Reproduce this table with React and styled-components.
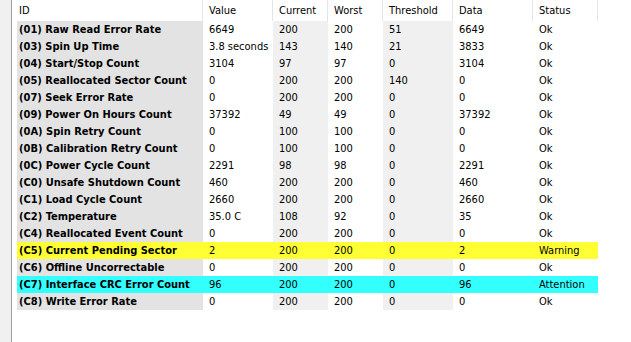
import styled, { createGlobalStyle } from "styled-components";

const GlobalStyle = createGlobalStyle`
    html, body {
        margin: 0;
        padding: 0;
        background: #ffffff;
    }
    body {
        font-family: "DejaVu Sans Condensed", "DejaVu Sans", sans-serif;
        font-stretch: condensed;
        font-size: 11px;
        color: #000000;
    }
`;

const Window = styled.div`
    display: flex;
    min-height: 100vh;
`;

const Gutter = styled.div`
    width: 11px;
    flex: none;
    background: #f0f0f0;
    border-right: 1px solid #a0a0a0;
`;

const ListView = styled.div`
    flex: 1;
    background: #ffffff;
`;

const Header = styled.div`
    display: grid;
    grid-template-columns: 191px 70px 55px 55px 70px 80px 65px;
    height: 21px;
`;

const HeaderCell = styled.div`
    border-right: 1px solid #e5e5e5;
    padding-left: ${(p) => (p.$first ? 7 : 6)}px;
    line-height: 21px;
    white-space: nowrap;
    overflow: hidden;
`;

const Row = styled.div`
    display: grid;
    grid-template-columns: 186px 70px 55px 55px 70px 80px 65px;
    margin-left: 5px;
    height: 17px;
    width: 581px;
    background: ${(p) => p.$tint || "transparent"};
`;

const IdCell = styled.div`
    background: ${(p) => (p.$tint ? "transparent" : "#e3e3e3")};
    font-weight: bold;
    padding: 1px 0 0 2px;
    line-height: 16px;
    white-space: nowrap;
    overflow: hidden;
`;

const Cell = styled.div`
    padding: 1px 0 0 6px;
    line-height: 16px;
    background: ${(p) => (p.$shade && !p.$tint ? "#f0f0f0" : "transparent")};
    white-space: nowrap;
    overflow: hidden;
`;

const columns = ["ID", "Value", "Current", "Worst", "Threshold", "Data", "Status"];

const attributes = [
    ["01", "Raw Read Error Rate", "6649", "200", "200", "51", "6649", "Ok"],
    ["03", "Spin Up Time", "3.8 seconds", "143", "140", "21", "3833", "Ok"],
    ["04", "Start/Stop Count", "3104", "97", "97", "0", "3104", "Ok"],
    ["05", "Reallocated Sector Count", "0", "200", "200", "140", "0", "Ok"],
    ["07", "Seek Error Rate", "0", "200", "200", "0", "0", "Ok"],
    ["09", "Power On Hours Count", "37392", "49", "49", "0", "37392", "Ok"],
    ["0A", "Spin Retry Count", "0", "100", "100", "0", "0", "Ok"],
    ["0B", "Calibration Retry Count", "0", "100", "100", "0", "0", "Ok"],
    ["0C", "Power Cycle Count", "2291", "98", "98", "0", "2291", "Ok"],
    ["C0", "Unsafe Shutdown Count", "460", "200", "200", "0", "460", "Ok"],
    ["C1", "Load Cycle Count", "2660", "200", "200", "0", "2660", "Ok"],
    ["C2", "Temperature", "35.0 C", "108", "92", "0", "35", "Ok"],
    ["C4", "Reallocated Event Count", "0", "200", "200", "0", "0", "Ok"],
    ["C5", "Current Pending Sector", "2", "200", "200", "0", "2", "Warning"],
    ["C6", "Offline Uncorrectable", "0", "200", "200", "0", "0", "Ok"],
    ["C7", "Interface CRC Error Count", "96", "200", "200", "0", "96", "Attention"],
    ["C8", "Write Error Rate", "0", "200", "200", "0", "0", "Ok"]
];

const statusColors = {
    Warning: "#ffff33",
    Attention: "#33ffff"
};

function AttributeRow({ attr }) {
    const [id, name, value, current, worst, threshold, data, status] = attr;
    const tint = statusColors[status];

    return (
        <Row $tint={tint}>
            <IdCell $tint={tint}>
                ({id}) {name}
            </IdCell>
            <Cell>{value}</Cell>
            <Cell $shade $tint={tint}>
                {current}
            </Cell>
            <Cell>{worst}</Cell>
            <Cell $shade $tint={tint}>
                {threshold}
            </Cell>
            <Cell>{data}</Cell>
            <Cell>{status}</Cell>
        </Row>
    );
}

function App() {
    return (
        <>
            <GlobalStyle />
            <Window>
                <Gutter />
                <ListView>
                    <Header>
                        {columns.map((c, i) => (
                            <HeaderCell key={c} $first={i === 0}>
                                {c}
                            </HeaderCell>
                        ))}
                    </Header>
                    {attributes.map((a) => (
                        <AttributeRow key={a[0]} attr={a} />
                    ))}
                </ListView>
            </Window>
        </>
    );
}

export default App;
